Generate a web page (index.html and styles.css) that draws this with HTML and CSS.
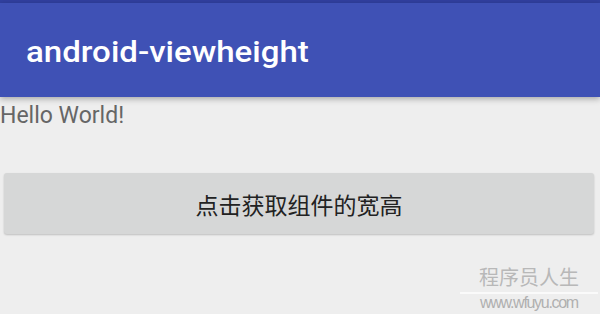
FILE: index.html
```html
<!DOCTYPE html>
<html>
<head>
<meta charset="utf-8">
<link rel="stylesheet" href="styles.css">
</head>
<body>
<div class="screen">
  <div class="statusbar"></div>
  <div class="toolbar"><span class="title">android-viewheight</span></div>
  <div class="content">
    <div class="hello">Hello World!</div>
    <div class="btn-wrap"><div class="btn">点击获取组件的宽高</div></div>
  </div>
  <div class="watermark">
    <div class="wm-cn">程序员人生</div>
    <div class="wm-line"></div>
    <div class="wm-en">www.wfuyu.com</div>
  </div>
</div>
</body>
</html>
```
FILE: styles.css
```css
html, body {
  margin: 0;
  padding: 0;
  width: 600px;
  height: 314px;
  overflow: hidden;
  background: #eeeeee;
  font-family: Roboto, "Noto Sans CJK SC", sans-serif;
}
.screen {
  position: relative;
  width: 600px;
  height: 314px;
  background: #eeeeee;
}
.statusbar {
  height: 3px;
  background: #3140a0;
}
.toolbar {
  position: relative;
  z-index: 1;
  height: 94px;
  background: #3f51b5;
  padding-left: 26px;
  box-shadow: 0 2px 6px rgba(0,0,0,0.3);
}
.title {
  display: inline-block;
  color: #ffffff;
  font-size: 29px;
  line-height: 34px;
  font-weight: 500;
  margin-top: 32px;
  transform: scaleX(1.14);
  transform-origin: left center;
}
.content {
  display: flex;
  flex-direction: column;
}
.hello {
  color: #666666;
  font-size: 23px;
  line-height: 26px;
  margin-top: 6px;
}
.btn-wrap {
  padding: 44px 6px 0 4px;
}
.btn {
  height: 61px;
  background: #d6d7d7;
  border-radius: 3px;
  box-shadow: 0 1px 2px rgba(0,0,0,0.2);
  display: flex;
  align-items: center;
  justify-content: center;
  color: #222222;
  font-family: "Noto Sans CJK SC", sans-serif;
  font-size: 23px;
}
.watermark {
  position: absolute;
  left: 460px;
  top: 263px;
  width: 138px;
  display: flex;
  flex-direction: column;
  align-items: center;
}
.wm-cn {
  color: #b8b8b8;
  font-family: "Noto Sans CJK SC", sans-serif;
  font-size: 20px;
  line-height: 28px;
}
.wm-line {
  width: 138px;
  height: 2px;
  background: #fafafa;
  margin-top: 1px;
}
.wm-en {
  color: #b0b0b0;
  font-family: "Liberation Sans", sans-serif;
  font-size: 16px;
  line-height: 17px;
  letter-spacing: -1.3px;
}
```
